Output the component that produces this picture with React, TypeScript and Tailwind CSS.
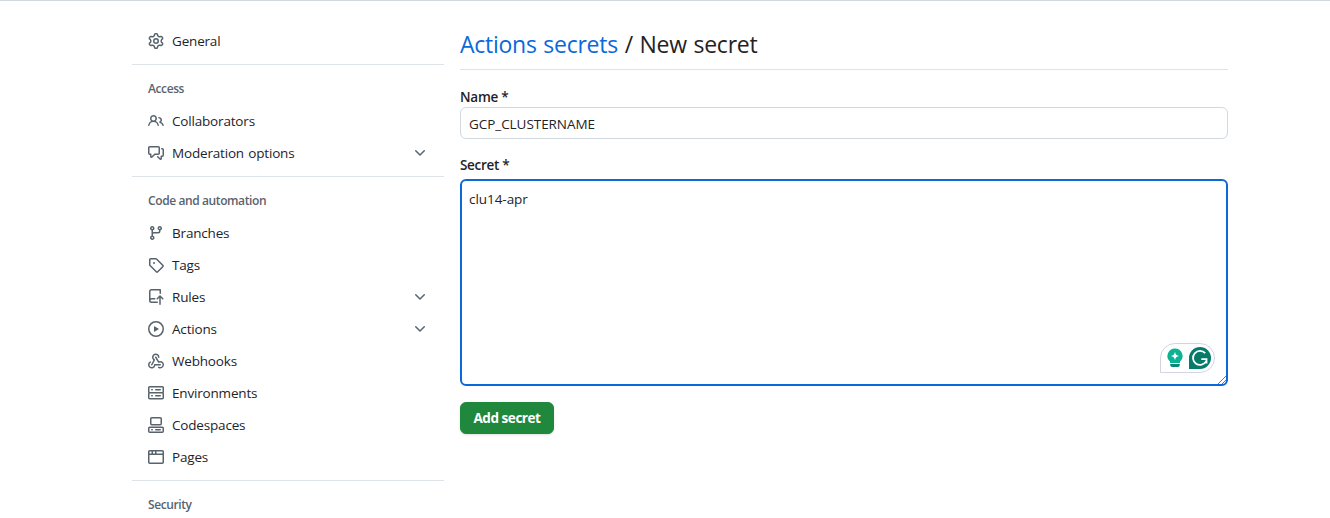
import type { ReactNode } from 'react';

const icons = {
  gear: 'M8 0a8.2 8.2 0 0 1 .701.031C9.444.095 9.99.645 10.16 1.29l.288 1.107c.018.066.079.158.212.224.231.114.454.243.668.386.123.082.233.09.299.071l1.103-.303c.644-.176 1.392.021 1.82.63.27.385.506.792.704 1.218.315.675.111 1.422-.364 1.891l-.814.806c-.049.048-.098.147-.088.294.016.257.016.515 0 .772-.01.147.038.246.088.294l.814.806c.475.469.679 1.216.364 1.891a7.977 7.977 0 0 1-.704 1.217c-.428.61-1.176.807-1.82.63l-1.102-.302c-.067-.019-.177-.011-.3.071a5.909 5.909 0 0 1-.668.386c-.133.066-.194.158-.211.224l-.29 1.106c-.168.646-.715 1.196-1.458 1.26a8.006 8.006 0 0 1-1.402 0c-.743-.064-1.289-.614-1.458-1.26l-.289-1.106c-.018-.066-.079-.158-.212-.224a5.738 5.738 0 0 1-.668-.386c-.123-.082-.233-.09-.299-.071l-1.103.303c-.644.176-1.392-.021-1.82-.63a8.12 8.12 0 0 1-.704-1.218c-.315-.675-.111-1.422.363-1.891l.815-.806c.05-.048.098-.147.088-.294a6.214 6.214 0 0 1 0-.772c.01-.147-.038-.246-.088-.294l-.815-.806C.635 6.045.431 5.298.746 4.623a7.92 7.92 0 0 1 .704-1.217c.428-.61 1.176-.807 1.82-.63l1.102.302c.067.019.177.011.3-.071.214-.143.437-.272.668-.386.133-.066.194-.158.211-.224l.29-1.106C6.009.645 6.556.095 7.299.03 7.53.01 7.764 0 8 0Zm-.571 1.525c-.036.003-.108.036-.137.146l-.289 1.105c-.147.561-.549.967-.998 1.189-.173.086-.34.183-.5.29-.417.278-.97.423-1.529.27l-1.103-.303c-.109-.03-.175.016-.195.045-.22.312-.412.644-.573.99-.014.031-.021.11.059.19l.815.806c.411.406.562.957.53 1.456a4.709 4.709 0 0 0 0 .582c.032.499-.119 1.05-.53 1.456l-.815.806c-.081.08-.073.159-.059.19.162.346.353.677.573.989.02.03.085.076.195.046l1.102-.303c.56-.153 1.113-.008 1.53.27.161.107.328.204.501.29.447.222.85.629.997 1.189l.289 1.105c.029.109.101.143.137.146a6.6 6.6 0 0 0 1.142 0c.036-.003.108-.036.137-.146l.289-1.105c.147-.561.549-.967.998-1.189.173-.086.34-.183.5-.29.417-.278.97-.423 1.529-.27l1.103.303c.109.029.175-.016.195-.045.22-.313.411-.644.573-.99.014-.031.021-.11-.059-.19l-.815-.806c-.411-.406-.562-.957-.53-1.456a4.709 4.709 0 0 0 0-.582c-.032-.499.119-1.05.53-1.456l.815-.806c.081-.08.073-.159.059-.19a6.464 6.464 0 0 0-.573-.989c-.02-.03-.085-.076-.195-.046l-1.102.303c-.56.153-1.113.008-1.53-.27a4.44 4.44 0 0 0-.501-.29c-.447-.222-.85-.629-.997-1.189l-.289-1.105c-.029-.11-.101-.143-.137-.146a6.6 6.6 0 0 0-1.142 0ZM11 8a3 3 0 1 1-6 0 3 3 0 0 1 6 0ZM9.5 8a1.5 1.5 0 1 0-3.001.001A1.5 1.5 0 0 0 9.5 8Z',
  people: 'M2 5.5a3.5 3.5 0 1 1 5.898 2.549 5.508 5.508 0 0 1 3.034 4.084.75.75 0 1 1-1.482.235 4 4 0 0 0-7.9 0 .75.75 0 0 1-1.482-.236A5.507 5.507 0 0 1 3.102 8.05 3.493 3.493 0 0 1 2 5.5ZM11 4a3.001 3.001 0 0 1 2.22 5.018 5.01 5.01 0 0 1 2.56 3.012.749.749 0 0 1-.885.954.752.752 0 0 1-.549-.514 3.507 3.507 0 0 0-2.522-2.372.75.75 0 0 1-.574-.73v-.352a.75.75 0 0 1 .416-.672A1.5 1.5 0 0 0 11 5.5.75.75 0 0 1 11 4Zm-5.5-.5a2 2 0 1 0-.001 3.999A2 2 0 0 0 5.5 3.5Z',
  discussion: 'M1.75 1h8.5c.966 0 1.75.784 1.75 1.75v5.5A1.75 1.75 0 0 1 10.25 10H7.061l-2.574 2.573A1.458 1.458 0 0 1 2 11.543V10h-.25A1.75 1.75 0 0 1 0 8.25v-5.5C0 1.784.784 1 1.75 1ZM1.5 2.75v5.5c0 .138.112.25.25.25h1a.75.75 0 0 1 .75.75v2.19l2.72-2.72a.749.749 0 0 1 .53-.22h3.5a.25.25 0 0 0 .25-.25v-5.5a.25.25 0 0 0-.25-.25h-8.5a.25.25 0 0 0-.25.25Zm13 2a.25.25 0 0 0-.25-.25h-.5a.75.75 0 0 1 0-1.5h.5c.966 0 1.75.784 1.75 1.75v5.5A1.75 1.75 0 0 1 14.25 12H14v1.543a1.458 1.458 0 0 1-2.487 1.03L9.22 12.28a.749.749 0 0 1 .326-1.275.749.749 0 0 1 .734.215l2.22 2.22v-2.19a.75.75 0 0 1 .75-.75h1a.25.25 0 0 0 .25-.25Z',
  branch: 'M9.5 3.25a2.25 2.25 0 1 1 3 2.122V6A2.5 2.5 0 0 1 10 8.5H6a1 1 0 0 0-1 1v1.128a2.251 2.251 0 1 1-1.5 0V5.372a2.25 2.25 0 1 1 1.5 0v1.836A2.493 2.493 0 0 1 6 7h4a1 1 0 0 0 1-1v-.628A2.25 2.25 0 0 1 9.5 3.25Zm-6 0a.75.75 0 1 0 1.5 0 .75.75 0 0 0-1.5 0Zm8.25-.75a.75.75 0 1 0 0 1.5.75.75 0 0 0 0-1.5ZM4.25 12a.75.75 0 1 0 0 1.5.75.75 0 0 0 0-1.5Z',
  tag: 'M1 7.775V2.75C1 1.784 1.784 1 2.75 1h5.025c.464 0 .91.184 1.238.513l6.25 6.25a1.75 1.75 0 0 1 0 2.474l-5.026 5.026a1.75 1.75 0 0 1-2.474 0l-6.25-6.25A1.752 1.752 0 0 1 1 7.775Zm1.5 0c0 .066.026.13.073.177l6.25 6.25a.25.25 0 0 0 .354 0l5.025-5.025a.25.25 0 0 0 0-.354l-6.25-6.25a.25.25 0 0 0-.177-.073H2.75a.25.25 0 0 0-.25.25ZM6 5a1 1 0 1 1 0 2 1 1 0 0 1 0-2Z',
  rules: 'M1 2.5A2.5 2.5 0 0 1 3.5 0h8.75a.75.75 0 0 1 .75.75v3.5a.75.75 0 0 1-1.5 0V1.5h-8a1 1 0 0 0-1 1v6.708A2.493 2.493 0 0 1 3.5 9h3.25a.75.75 0 0 1 0 1.5H3.5a1 1 0 0 0 0 2h5.75a.75.75 0 0 1 0 1.5H3.5A2.5 2.5 0 0 1 1 11.5Zm13.23 7.79-1.48-1.484v6.444a.75.75 0 0 1-1.5 0V8.806L9.78 10.28a.751.751 0 0 1-1.042-.018.751.751 0 0 1-.018-1.042l2.75-2.75a.75.75 0 0 1 1.06 0l2.75 2.75a.749.749 0 0 1-.326 1.275.749.749 0 0 1-.734-.215Z',
  play: 'M8 0a8 8 0 1 1 0 16A8 8 0 0 1 8 0ZM1.5 8a6.5 6.5 0 1 0 13 0 6.5 6.5 0 0 0-13 0Zm4.879-2.773 4.264 2.559a.25.25 0 0 1 0 .428l-4.264 2.559A.25.25 0 0 1 6 10.559V5.442a.25.25 0 0 1 .379-.215Z',
  webhook: 'M5.5 4.25a2.25 2.25 0 0 1 4.5 0 .75.75 0 0 0 1.5 0 3.75 3.75 0 1 0-6.14 2.889l-2.272 4.258a.75.75 0 0 0 1.324.706L7 7.25a.75.75 0 0 0-.309-1.015A2.25 2.25 0 0 1 5.5 4.25Z M7.364 3.607a.75.75 0 0 1 1.03.257l2.608 4.349a3.75 3.75 0 1 1-.628 6.785.75.75 0 0 1 .752-1.299 2.25 2.25 0 1 0-.033-3.88.75.75 0 0 1-1.03-.256L7.107 4.636a.75.75 0 0 1 .257-1.03Z M2.9 8.776A.75.75 0 0 1 2.625 9.8 2.25 2.25 0 1 0 6 11.75a.75.75 0 0 1 .75-.751h5.5a.75.75 0 0 1 0 1.5H7.425a3.751 3.751 0 1 1-5.55-3.998.75.75 0 0 1 1.024.274Z',
  server: 'M1.75 1h12.5c.966 0 1.75.784 1.75 1.75v4c0 .372-.116.717-.314 1 .198.283.314.628.314 1v4a1.75 1.75 0 0 1-1.75 1.75H1.75A1.75 1.75 0 0 1 0 12.75v-4c0-.358.109-.707.314-1a1.739 1.739 0 0 1-.314-1v-4C0 1.784.784 1 1.75 1ZM1.5 2.75v4c0 .138.112.25.25.25h12.5a.25.25 0 0 0 .25-.25v-4a.25.25 0 0 0-.25-.25H1.75a.25.25 0 0 0-.25.25Zm.25 5.75a.25.25 0 0 0-.25.25v4c0 .138.112.25.25.25h12.5a.25.25 0 0 0 .25-.25v-4a.25.25 0 0 0-.25-.25ZM7 4.75A.75.75 0 0 1 7.75 4h4.5a.75.75 0 0 1 0 1.5h-4.5A.75.75 0 0 1 7 4.75ZM7.75 10h4.5a.75.75 0 0 1 0 1.5h-4.5a.75.75 0 0 1 0-1.5ZM3 4.75A.75.75 0 0 1 3.75 4h.5a.75.75 0 0 1 0 1.5h-.5A.75.75 0 0 1 3 4.75ZM3.75 10h.5a.75.75 0 0 1 0 1.5h-.5a.75.75 0 0 1 0-1.5Z',
  codespaces: 'M0 11.25c0-.966.784-1.75 1.75-1.75h12.5c.966 0 1.75.784 1.75 1.75v3A1.75 1.75 0 0 1 14.25 16H1.75A1.75 1.75 0 0 1 0 14.25Zm2-9.5C2 .784 2.784 0 3.75 0h8.5C13.216 0 14 .784 14 1.75v5a1.75 1.75 0 0 1-1.75 1.75h-8.5A1.75 1.75 0 0 1 2 6.75Zm1.75-.25a.25.25 0 0 0-.25.25v5c0 .138.112.25.25.25h8.5a.25.25 0 0 0 .25-.25v-5a.25.25 0 0 0-.25-.25Zm-2 9.5a.25.25 0 0 0-.25.25v3c0 .138.112.25.25.25h12.5a.25.25 0 0 0 .25-.25v-3a.25.25 0 0 0-.25-.25ZM7 12.75a.75.75 0 0 1 .75-.75h4.5a.75.75 0 0 1 0 1.5h-4.5a.75.75 0 0 1-.75-.75Zm-4 0a.75.75 0 0 1 .75-.75h.5a.75.75 0 0 1 0 1.5h-.5a.75.75 0 0 1-.75-.75Z',
  browser: 'M0 2.75C0 1.784.784 1 1.75 1h12.5c.966 0 1.75.784 1.75 1.75v10.5A1.75 1.75 0 0 1 14.25 15H1.75A1.75 1.75 0 0 1 0 13.25ZM14.5 6h-13v7.25c0 .138.112.25.25.25h12.5a.25.25 0 0 0 .25-.25Zm-6-3.5v2h6V2.75a.25.25 0 0 0-.25-.25ZM5 2.5v2h2v-2Zm-3.25 0a.25.25 0 0 0-.25.25V4.5h2v-2Z',
  chevron: 'M12.78 5.22a.749.749 0 0 1 0 1.06l-4.25 4.25a.749.749 0 0 1-1.06 0L3.22 6.28a.749.749 0 1 1 1.06-1.06L8 8.939l3.72-3.719a.749.749 0 0 1 1.06 0Z',
};

function Icon({ name }: { name: keyof typeof icons }) {
  return (
    <svg className="size-4 shrink-0 fill-[#59636e]" viewBox="0 0 16 16">
      <path d={icons[name]} />
    </svg>
  );
}

function Item({ icon, children, more }: { icon: keyof typeof icons; children: ReactNode; more?: boolean }) {
  return (
    <li className="flex h-8 items-center gap-2 px-4 text-[13.5px] tracking-[-0.18px] [word-spacing:1px]">
      <Icon name={icon} />
      <span className="grow">{children}</span>
      {more && <Icon name="chevron" />}
    </li>
  );
}

function Section({ title, children }: { title: string; children?: ReactNode }) {
  return (
    <section className="mt-[7px] border-t border-[#d1d9e0b3] pt-2">
      <h3 className="flex h-8 items-center pl-4 text-[12px] font-semibold tracking-[-0.4px] text-[#59636e]">{title}</h3>
      <ul>{children}</ul>
    </section>
  );
}

function AssistantBadge() {
  return (
    <div className="absolute right-[11px] bottom-[11px] flex h-[30px] w-[55px] items-center gap-[3px] rounded-[15px] rounded-bl-none border border-[#d2d4e4] bg-white pl-[4px]">
      <svg className="h-[22px] w-[20px] shrink-0" viewBox="0 0 20 22">
        <path d="M10 1.5a7.5 7.5 0 0 0-5 13.1V16h10v-1.4a7.5 7.5 0 0 0-5-13.1Z" fill="#0db294" />
        <path d="M10 4.7c.5 2.7 1.5 3.7 4.2 4.3-2.7.6-3.7 1.6-4.2 4.3-.5-2.7-1.5-3.7-4.2-4.3 2.7-.6 3.7-1.6 4.2-4.3Z" fill="#fff" />
        <path d="M5.2 17h9.6v1a2 2 0 0 1-2 2H7.2a2 2 0 0 1-2-2Z" fill="#078774" />
      </svg>
      <svg className="ml-px size-[22px] shrink-0" viewBox="0 0 22 22">
        <path d="M0 11a11 11 0 1 1 11 11H0Z" fill="#067b69" />
        <path d="M16.2 6.2A7 7 0 1 0 17.2 14.2M12.3 12.2h5.2v4.4" fill="none" stroke="#fff" strokeWidth="1.8" />
      </svg>
    </div>
  );
}

export default function App() {
  return (
    <div className="flex h-[518px] items-start gap-4 overflow-hidden border-t border-[#d1d9e0] bg-white pl-[132px] font-['Open_Sans','Noto_Sans',sans-serif] text-[#1f2328]">
      <nav className="w-[312px] shrink-0 pt-6">
        <ul>
          <Item icon="gear">General</Item>
        </ul>
        <Section title="Access">
          <Item icon="people">Collaborators</Item>
          <Item icon="discussion" more>Moderation options</Item>
        </Section>
        <Section title="Code and automation">
          <Item icon="branch">Branches</Item>
          <Item icon="tag">Tags</Item>
          <Item icon="rules" more>Rules</Item>
          <Item icon="play" more>Actions</Item>
          <Item icon="webhook">Webhooks</Item>
          <Item icon="server">Environments</Item>
          <Item icon="codespaces">Codespaces</Item>
          <Item icon="browser">Pages</Item>
        </Section>
        <Section title="Security" />
      </nav>
      <main className="w-[768px] shrink-0 pt-6">
        <h2 className="h-[45px] border-b border-[#d1d9e0b3] text-[23px] leading-[39px] tracking-[-0.26px] [word-spacing:1px]">
          <a className="text-[#0969da]">Actions secrets</a> / New secret
        </h2>
        <label className="mt-[17px] block h-5 text-[13.5px] leading-[21px] font-semibold tracking-[-0.25px]">Name *</label>
        <div className="flex h-8 items-center rounded-md border border-[#d1d9e0] px-2 pt-0.5 text-[13.5px] tracking-[-0.05px]">GCP_CLUSTERNAME</div>
        <label className="mt-4 block h-6 text-[13.5px] leading-[21px] font-semibold tracking-[-0.3px]">Secret *</label>
        <div className="relative h-[207px] rounded-md border-2 border-[#0969da] px-[7px] pt-2 text-[13.5px] leading-5 tracking-[-0.05px]">
          clu14-apr
          <AssistantBadge />
          <svg className="absolute right-0 bottom-0 size-2" viewBox="0 0 8 8">
            <path d="M0 8 8 0M4 8l4-4" stroke="#555" strokeWidth="0.8" />
          </svg>
        </div>
        <button className="mt-4 h-8 w-[94px] rounded-md border border-[#1f883d] bg-[#1f883d] text-[13.5px] font-bold tracking-[-0.45px] text-white shadow-sm">Add secret</button>
      </main>
    </div>
  );
}
